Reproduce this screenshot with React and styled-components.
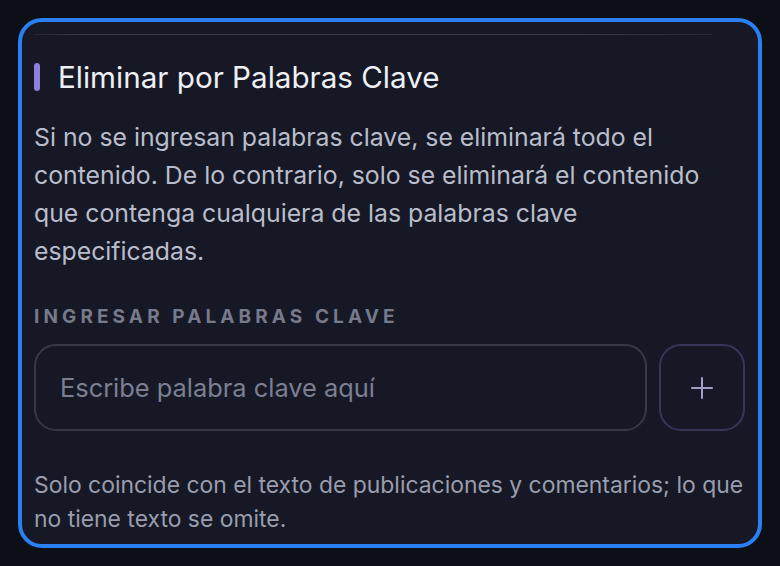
import React from "react";
import styled, { createGlobalStyle } from "styled-components";

const Global = createGlobalStyle`
  html, body { margin: 0; padding: 0; background: #0d0f16; }
  body { font-family: Inter, "Noto Sans", "Liberation Sans", sans-serif; -webkit-font-smoothing: antialiased; }
  * { box-sizing: border-box; }
`;

const Page = styled.div`
  width: 780px;
  height: 566px;
  padding: 18px;
  background: #0d0f16;
`;

const Card = styled.section`
  height: 530px;
  border: 4px solid #2a7ff3;
  border-radius: 24px;
  background: #161925;
  padding: 12px 13px 8px 12px;
  display: flex;
  flex-direction: column;
`;

const Divider = styled.div`
  height: 2px;
  margin: 0 32px 0 0;
  background: linear-gradient(90deg, rgba(60,63,78,0.3) 0%, #383b49 7%, #383b49 80%, rgba(50,53,66,0.5) 100%);
`;

const TitleRow = styled.div`
  display: flex;
  align-items: center;
  gap: 18px;
  margin-top: 24px;
`;

const Accent = styled.span`
  width: 6px;
  height: 28px;
  border-radius: 3px;
  background: #8c80d8;
  flex: none;
`;

const Title = styled.h2`
  margin: 0;
  font-size: 29.6px;
  line-height: 36px;
  font-weight: 400;
  color: #eef0f6;
`;

const Body = styled.p`
  margin: 23px 0 0;
  font-size: 24.8px;
  line-height: 38px;
  color: #b9bdcb;
`;

const Label = styled.div`
  margin-top: 35px;
  font-size: 19px;
  line-height: 24px;
  font-weight: 700;
  letter-spacing: 4.1px;
  color: #777a8b;
`;

const InputRow = styled.div`
  display: flex;
  gap: 12px;
  margin-top: 15px;
`;

const Input = styled.input`
  flex: 1;
  height: 87px;
  border: 2px solid #363947;
  border-radius: 22px;
  background: transparent;
  padding: 0 24px;
  font-family: inherit;
  font-size: 25.4px;
  color: #e0e2ea;
  outline: none;
  &::placeholder { color: #7c7f92; }
`;

const AddButton = styled.button`
  width: 86px;
  height: 87px;
  flex: none;
  border: 2px solid #37365a;
  border-radius: 22px;
  background: transparent;
  display: flex;
  align-items: center;
  justify-content: center;
  padding: 0;
  cursor: pointer;
`;

const Note = styled.p`
  margin: 37px 0 0;
  font-size: 22.9px;
  line-height: 34px;
  color: #9a9dae;
`;

export default function App() {
  return (
    <Page>
      <Global />
      <Card>
        <Divider />
        <TitleRow>
          <Accent />
          <Title>Eliminar por Palabras Clave</Title>
        </TitleRow>
        <Body>
          Si no se ingresan palabras clave, se eliminará todo el contenido. De lo contrario, solo se eliminará el contenido que contenga cualquiera de las palabras clave especificadas.
        </Body>
        <Label>INGRESAR PALABRAS CLAVE</Label>
        <InputRow>
          <Input placeholder="Escribe palabra clave aquí" />
          <AddButton aria-label="Agregar">
            <svg width="24" height="24" viewBox="0 0 24 24" fill="none" stroke="#a39fcc" strokeWidth="2" strokeLinecap="round">
              <path d="M12 2v20M2 12h20" />
            </svg>
          </AddButton>
        </InputRow>
        <Note>
          Solo coincide con el texto de publicaciones y comentarios; lo que no tiene texto se omite.
        </Note>
      </Card>
    </Page>
  );
}
